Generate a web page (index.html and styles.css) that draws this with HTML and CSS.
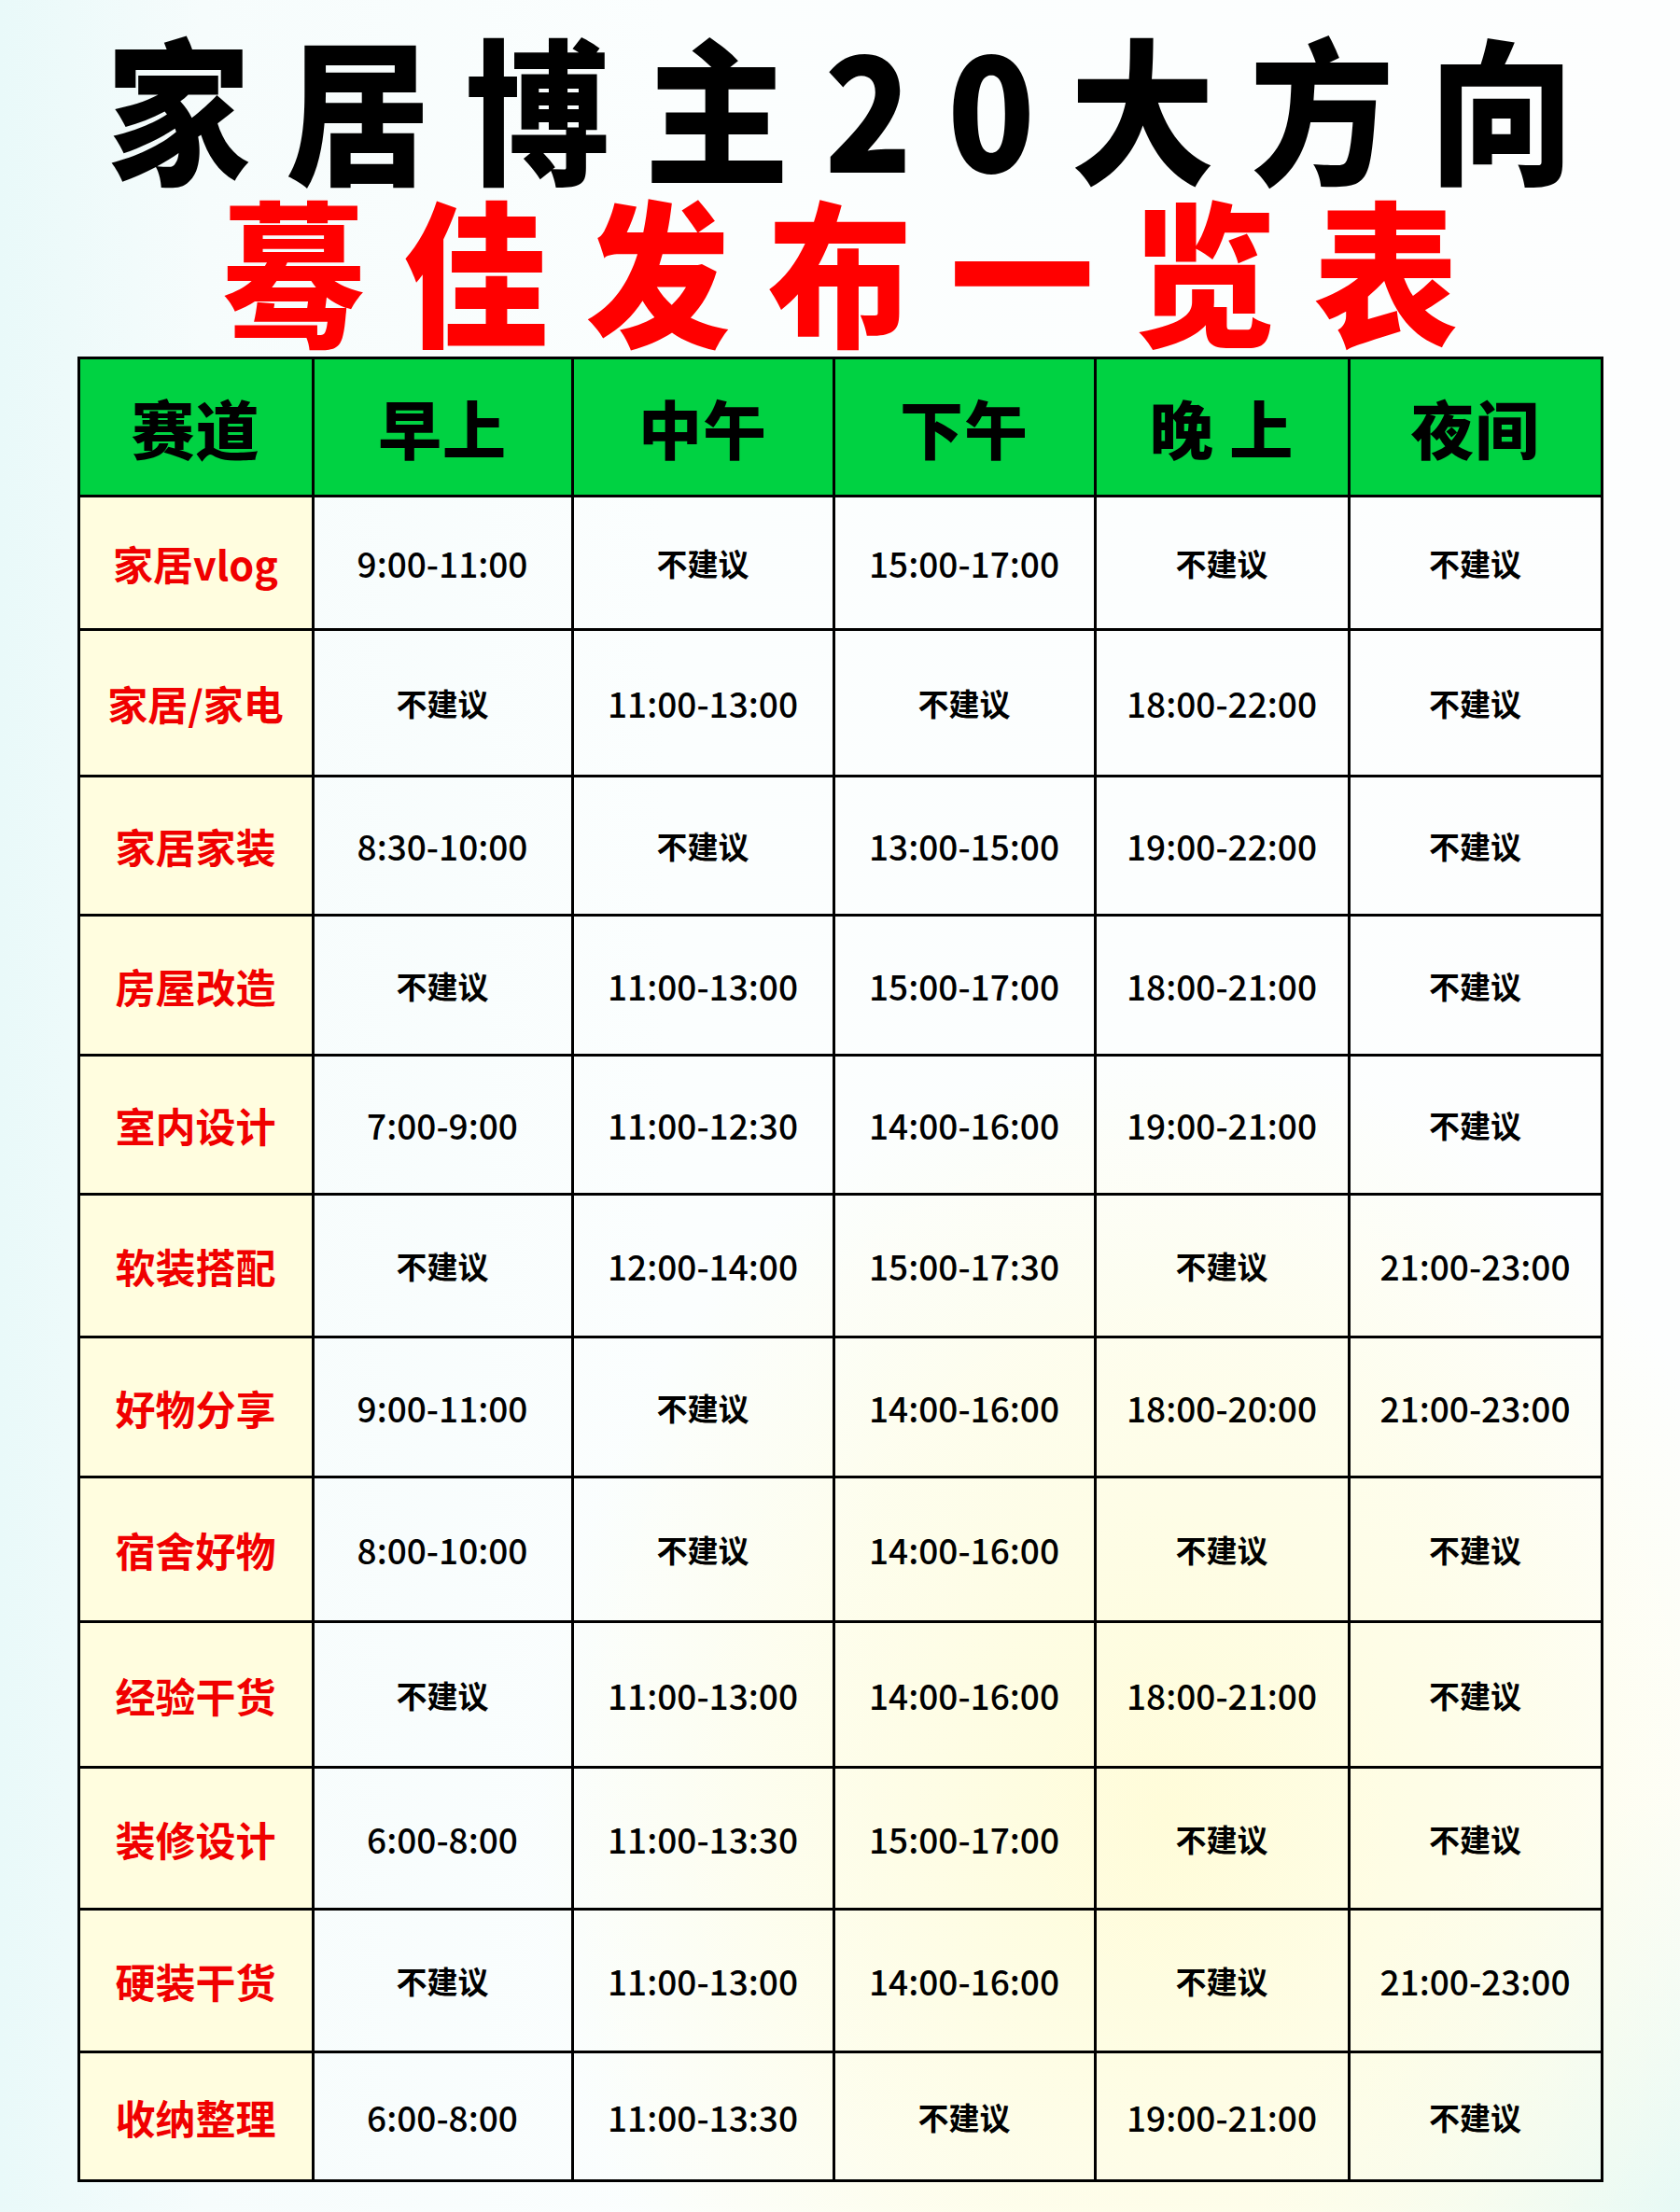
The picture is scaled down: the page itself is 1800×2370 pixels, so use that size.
FILE: index.html
```html
<!DOCTYPE html>
<html lang="zh-CN">
<head>
<meta charset="utf-8">
<title>家居博主20大方向 蓦佳发布一览表</title>
<link rel="stylesheet" href="styles.css">
</head>
<body>
<div class="page">
  <header class="titles">
    <h1 class="title-main">家居博主20大方向</h1>
    <h2 class="title-sub">蓦佳发布一览表</h2>
  </header>
  <table class="schedule">
    <colgroup>
      <col class="c-track"><col class="c-1"><col class="c-2"><col class="c-3"><col class="c-4"><col class="c-5">
    </colgroup>
    <thead>
      <tr class="r-head">
        <th>赛道</th><th>早上</th><th>中午</th><th>下午</th><th>晚&nbsp;上</th><th>夜间</th>
      </tr>
    </thead>
    <tbody>
      <tr class="r1"><td class="track">家居vlog</td><td class="time">9:00-11:00</td><td class="no">不建议</td><td class="time">15:00-17:00</td><td class="no">不建议</td><td class="no">不建议</td></tr>
      <tr class="r2"><td class="track">家居/家电</td><td class="no">不建议</td><td class="time">11:00-13:00</td><td class="no">不建议</td><td class="time">18:00-22:00</td><td class="no">不建议</td></tr>
      <tr class="r3"><td class="track">家居家装</td><td class="time">8:30-10:00</td><td class="no">不建议</td><td class="time">13:00-15:00</td><td class="time">19:00-22:00</td><td class="no">不建议</td></tr>
      <tr class="r4"><td class="track">房屋改造</td><td class="no">不建议</td><td class="time">11:00-13:00</td><td class="time">15:00-17:00</td><td class="time">18:00-21:00</td><td class="no">不建议</td></tr>
      <tr class="r5"><td class="track">室内设计</td><td class="time">7:00-9:00</td><td class="time">11:00-12:30</td><td class="time">14:00-16:00</td><td class="time">19:00-21:00</td><td class="no">不建议</td></tr>
      <tr class="r6"><td class="track">软装搭配</td><td class="no">不建议</td><td class="time">12:00-14:00</td><td class="time">15:00-17:30</td><td class="no">不建议</td><td class="time">21:00-23:00</td></tr>
      <tr class="r7"><td class="track">好物分享</td><td class="time">9:00-11:00</td><td class="no">不建议</td><td class="time">14:00-16:00</td><td class="time">18:00-20:00</td><td class="time">21:00-23:00</td></tr>
      <tr class="r8"><td class="track">宿舍好物</td><td class="time">8:00-10:00</td><td class="no">不建议</td><td class="time">14:00-16:00</td><td class="no">不建议</td><td class="no">不建议</td></tr>
      <tr class="r9"><td class="track">经验干货</td><td class="no">不建议</td><td class="time">11:00-13:00</td><td class="time">14:00-16:00</td><td class="time">18:00-21:00</td><td class="no">不建议</td></tr>
      <tr class="r10"><td class="track">装修设计</td><td class="time">6:00-8:00</td><td class="time">11:00-13:30</td><td class="time">15:00-17:00</td><td class="no">不建议</td><td class="no">不建议</td></tr>
      <tr class="r11"><td class="track">硬装干货</td><td class="no">不建议</td><td class="time">11:00-13:00</td><td class="time">14:00-16:00</td><td class="no">不建议</td><td class="time">21:00-23:00</td></tr>
      <tr class="r12"><td class="track">收纳整理</td><td class="time">6:00-8:00</td><td class="time">11:00-13:30</td><td class="no">不建议</td><td class="time">19:00-21:00</td><td class="no">不建议</td></tr>
    </tbody>
  </table>
</div>
</body>
</html>
```

FILE: styles.css
```css
html, body {
  margin: 0;
  padding: 0;
}

body {
  width: 1800px;
  height: 2370px;
  overflow: hidden;
  font-family: "Noto Sans CJK SC", "Noto Sans", sans-serif;
  color: #000;
  background:
    radial-gradient(ellipse 900px 1100px at 1250px 1950px, rgba(255, 252, 215, 0.95) 0%, rgba(255, 253, 225, 0.6) 45%, rgba(255, 255, 255, 0) 75%),
    radial-gradient(ellipse 500px 500px at 1850px 2420px, rgba(225, 248, 245, 1) 0%, rgba(225, 248, 245, 0) 100%),
    linear-gradient(90deg, #e9f9f9 0%, #f6fcfc 12%, #fbfefe 40%, #fdfefe 100%);
}

.page {
  display: flex;
  flex-direction: column;
  align-items: center;
  padding-top: 22px;
}

.titles {
  display: flex;
  flex-direction: column;
  align-items: center;
  width: 1800px;
  margin-bottom: 6px;
}

.title-main,
.title-sub {
  margin: 0;
  font-weight: 900;
  font-size: 168px;
  line-height: 180px;
  height: 180px;
  white-space: nowrap;
  text-align: center;
  width: 1800px;
  transform: scaleX(0.92);
}

.title-main {
  letter-spacing: 41px;
  text-indent: 41px;
}

.title-sub {
  color: #ff0000;
  letter-spacing: 44px;
  text-indent: 44px;
  margin-top: -6px;
}

.schedule {
  border-collapse: collapse;
  border: 3px solid #000;
  table-layout: fixed;
  width: 1632px;
}

.c-track { width: 251px; }
.c-1 { width: 278px; }
.c-2 { width: 280px; }
.c-3 { width: 280px; }
.c-4 { width: 272px; }
.c-5 { width: 271px; }

.schedule th,
.schedule td {
  border: 3px solid #000;
  padding: 0;
  text-align: center;
  vertical-align: middle;
}

.schedule th {
  background: #00d242;
  font-size: 68px;
  font-weight: 900;
  color: #000;
  letter-spacing: 1px;
}

.r-head { height: 148px; }
.r1 { height: 143px; }
.r2 { height: 157px; }
.r3 { height: 149px; }
.r4 { height: 150px; }
.r5 { height: 149px; }
.r6 { height: 153px; }
.r7 { height: 150px; }
.r8 { height: 155px; }
.r9 { height: 156px; }
.r10 { height: 152px; }
.r11 { height: 153px; }
.r12 { height: 138px; }

.track {
  background: #fffddf;
  color: #f00000;
  font-size: 43px;
  font-weight: 700;
}

.time {
  font-size: 37px;
  font-weight: 500;
}

.no {
  font-size: 33px;
  font-weight: 700;
}
```
